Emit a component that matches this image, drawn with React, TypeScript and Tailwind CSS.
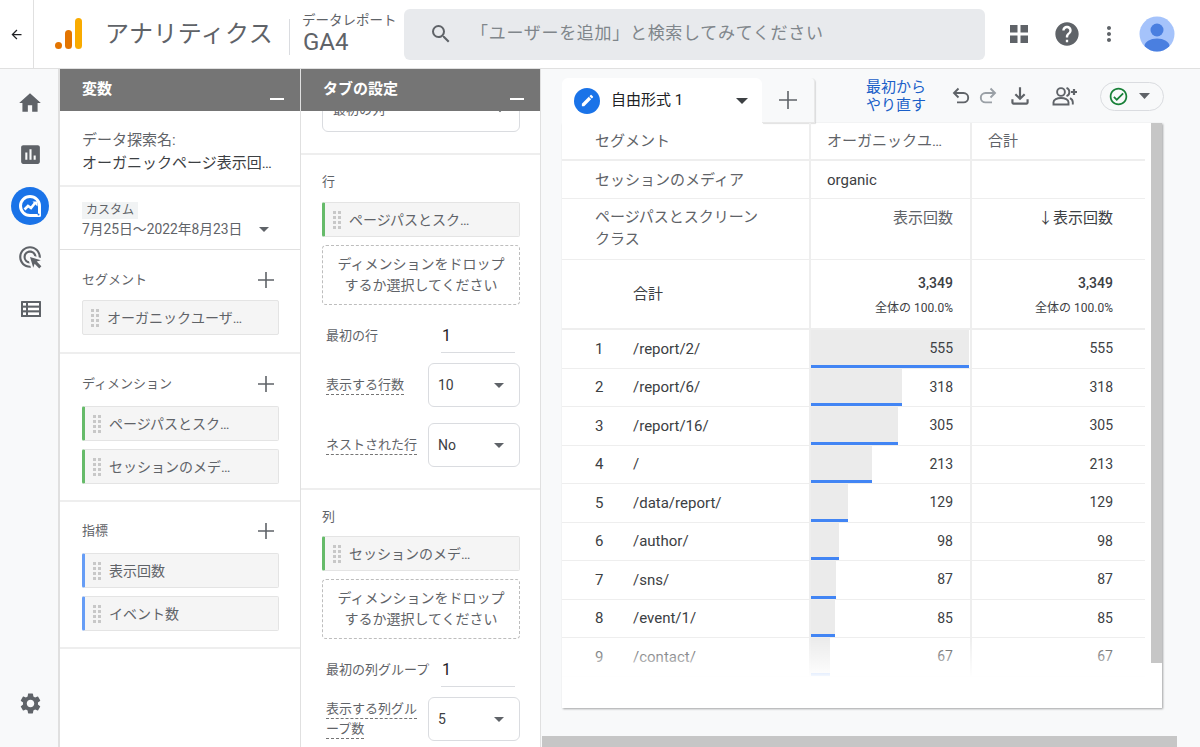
import {
  MdAdsClick,
  MdArrowBack,
  MdArrowDropDown,
  MdAssessment,
  MdEdit,
  MdHelp,
  MdHome,
  MdMoreVert,
  MdOutlineCheckCircle,
  MdOutlineFileDownload,
  MdSearch,
  MdSettings,
} from "react-icons/md";

const rows = [
  { path: "/report/2/", value: 555 },
  { path: "/report/6/", value: 318 },
  { path: "/report/16/", value: 305 },
  { path: "/", value: 213 },
  { path: "/data/report/", value: 129 },
  { path: "/author/", value: 98 },
  { path: "/sns/", value: 87 },
  { path: "/event/1/", value: 85 },
  { path: "/contact/", value: 67 },
];

function Logo() {
  return (
    <svg width="30" height="34" viewBox="0 0 30 34" className="shrink-0">
      <circle cx="4.5" cy="28.5" r="3.5" fill="#e37400" />
      <rect x="11" y="13" width="7" height="19" rx="3.5" fill="#e37400" />
      <rect x="21" y="1" width="7" height="31" rx="3.5" fill="#f9ab00" />
    </svg>
  );
}

function AppsIcon() {
  return (
    <svg width="18" height="18" viewBox="0 0 18 18" fill="#5f6368">
      <rect x="0" y="0" width="7.5" height="7.5" />
      <rect x="10.5" y="0" width="7.5" height="7.5" />
      <rect x="0" y="10.5" width="7.5" height="7.5" />
      <rect x="10.5" y="10.5" width="7.5" height="7.5" />
    </svg>
  );
}

function Avatar() {
  return (
    <svg width="36" height="36" viewBox="0 0 36 36">
      <defs>
        <clipPath id="avatar-clip">
          <circle cx="18" cy="18" r="17.5" />
        </clipPath>
      </defs>
      <circle cx="18" cy="18" r="17.5" fill="#a5c3fb" />
      <g clipPath="url(#avatar-clip)" fill="#4a7fe0">
        <circle cx="18" cy="14" r="6.5" />
        <ellipse cx="18" cy="30" rx="12.5" ry="7.5" />
      </g>
    </svg>
  );
}

function ExploreIcon() {
  return (
    <svg width="38" height="38" viewBox="0 0 38 38">
      <circle cx="19" cy="19" r="19" fill="#1a73e8" />
      <path
        d="M19 9.5a9.5 9.5 0 1 0 0 19h9.5V19A9.5 9.5 0 0 0 19 9.5z"
        fill="none"
        stroke="#fff"
        strokeWidth="3"
        strokeLinejoin="round"
      />
      <path d="M13.5 22.5l3.5-3.5 3 2 4-5" fill="none" stroke="#fff" strokeWidth="2.6" />
      <path d="M21.5 14.5h5v5z" fill="#fff" />
      <circle cx="27.5" cy="27.5" r="1" fill="#1a73e8" />
    </svg>
  );
}

function ListIcon() {
  return (
    <svg width="20" height="16" viewBox="0 0 20 16" className="ml-[4px] mt-[31px]">
      <rect width="20" height="16" rx="0.5" fill="#5f6368" />
      <g fill="#fff">
        <rect x="2" y="2" width="3" height="2.6" />
        <rect x="7" y="2" width="11" height="2.6" />
        <rect x="2" y="6.7" width="3" height="2.6" />
        <rect x="7" y="6.7" width="11" height="2.6" />
        <rect x="2" y="11.4" width="3" height="2.6" />
        <rect x="7" y="11.4" width="11" height="2.6" />
      </g>
    </svg>
  );
}

function UndoIcon({ className }: { className?: string }) {
  return (
    <svg width="18" height="18" viewBox="0 0 18 18" fill="none" stroke="currentColor" strokeWidth="1.9" className={className}>
      <path d="M6.5 1.5L2 6l4.5 4.5" />
      <path d="M2 6h9.5a4.7 4.7 0 0 1 0 9.4H5" />
    </svg>
  );
}

function ShareIcon() {
  return (
    <svg width="26" height="20" viewBox="0 0 26 20" fill="none" stroke="#5f6368" strokeWidth="1.9">
      <circle cx="9" cy="6" r="3.9" />
      <path d="M1.5 18.5v-2.2c0-2.6 3.6-4.3 7.5-4.3s7.5 1.700 7.500 4.300v2.200z" />
      <path d="M14.500 1.800a4.500 4.500 0 0 1 0 8.400" />
      <path d="M18 12.200c1.700.9 2.800 2.300 2.800 4.100v2.200" />
      <path d="M22 3v6M19 6h6" strokeWidth="2.200" />
    </svg>
  );
}

function Handle() {
  return (
    <div className="grid shrink-0 grid-cols-2 gap-x-[2px] gap-y-[2px]">
      {Array.from({ length: 8 }).map((_, i) => (
        <span key={i} className="h-[3px] w-[3px] bg-[#c8c8c8]" />
      ))}
    </div>
  );
}

function Chip({ label, stripe }: { label: string; stripe?: "green" | "blue" }) {
  const stripeClass =
    stripe === "green" ? "border-l-[3px] border-l-[#66bb6a]" : stripe === "blue" ? "border-l-[3px] border-l-[#669df6]" : "";
  return (
    <div
      className={`flex h-[35px] items-center gap-[8px] rounded-[2px] border border-[#e4e4e4] bg-[#f5f5f5] pl-[8px] text-[14px] text-[#5f6368] ${stripeClass}`}
    >
      <Handle />
      <span className="truncate pt-[2px]">{label}</span>
    </div>
  );
}

function PanelHeader({ title }: { title: string }) {
  return (
    <div className="relative z-10 flex h-[42px] shrink-0 items-start justify-between bg-[#757575] pl-[22px] pr-[16px] pt-[10px] text-[15px] font-bold leading-[20px] text-white">
      <span>{title}</span>
      <span className="mt-[19px] h-[2px] w-[14px] bg-white" />
    </div>
  );
}

function SectionTitle({ title }: { title: string }) {
  return (
    <div className="flex h-[22px] items-center justify-between text-[13px] text-[#5f6368]">
      <span>{title}</span>
      <svg width="16" height="16" viewBox="0 0 16 16" className="mr-[5px]" stroke="#5f6368" strokeWidth="1.6">
        <path d="M8 0v16M0 8h16" />
      </svg>
    </div>
  );
}

function DropZone() {
  return (
    <div className="mt-[8px] flex h-[60px] flex-col items-center justify-center rounded-[4px] border border-dashed border-[#bdbdbd] text-[14px] leading-[21px] text-[#5f6368]">
      <span>ディメンションをドロップ</span>
      <span>するか選択してください</span>
    </div>
  );
}

function SelectBox({ value }: { value: string }) {
  return (
    <div className="flex h-[44px] w-[92px] shrink-0 items-center justify-between rounded-[6px] border border-[#dadce0] pl-[9px] pr-[8px] text-[14px] text-[#3c4043]">
      <span>{value}</span>
      <MdArrowDropDown size={24} className="text-[#5f6368]" />
    </div>
  );
}

function InputRow({ label }: { label: string }) {
  return (
    <div className="flex h-[34px] items-center pl-[4px] text-[13px] text-[#5f6368]">
      <span className="w-[115px] shrink-0 whitespace-nowrap">{label}</span>
      <span className="flex h-[34px] w-[74px] items-center border-b border-[#dadce0] pl-[1px] text-[16px] text-[#202124]">1</span>
    </div>
  );
}

function SelectRow({ lines, value }: { lines: string[]; value: string }) {
  return (
    <div className="flex items-center justify-between pl-[4px] text-[13px] leading-[20px] text-[#5f6368]">
      <div className="flex flex-col items-start">
        {lines.map((line) => (
          <span key={line} className="border-b border-dashed border-[#757575] leading-[19px]">
            {line}
          </span>
        ))}
      </div>
      <SelectBox value={value} />
    </div>
  );
}

function VariablesPanel() {
  return (
    <div className="flex w-[241px] shrink-0 flex-col border-r border-[#e0e0e0] bg-white">
      <PanelHeader title="変数" />
      <div className="flex h-[76px] flex-col justify-center border-b-2 border-[#eeeeee] px-[22px] pt-[7px] text-[15px] leading-[23px]">
        <span className="text-[#5f6368]">データ探索名:</span>
        <span className="whitespace-nowrap text-[#3c4043]">オーガニックページ表示回…</span>
      </div>
      <div className="h-[63px] border-b border-[#e0e0e0] px-[22px] pt-[15px] text-[#5f6368]">
        <span className="block w-fit whitespace-nowrap bg-[#f1f3f4] px-[4px] text-[12px] leading-[17px]">カスタム</span>
        <div className="flex items-center justify-between pr-[9px] text-[13.8px] leading-[20px]">
          <span className="whitespace-nowrap">7月25日～2022年8月23日</span>
          <svg width="10" height="5" viewBox="0 0 10 5" fill="#5f6368" className="mt-[1px]">
            <path d="M0 0h10L5 5z" />
          </svg>
        </div>
      </div>
      <div className="h-[104px] border-b-2 border-[#eeeeee] pl-[22px] pr-[21px] pt-[19px]">
        <SectionTitle title="セグメント" />
        <div className="mt-[9px]">
          <Chip label="オーガニックユーザ…" />
        </div>
      </div>
      <div className="h-[148px] border-b-2 border-[#eeeeee] pl-[22px] pr-[21px] pt-[19px]">
        <SectionTitle title="ディメンション" />
        <div className="mt-[11px] flex flex-col gap-[8px]">
          <Chip label="ページパスとスク…" stripe="green" />
          <Chip label="セッションのメデ…" stripe="green" />
        </div>
      </div>
      <div className="h-[147px] border-b-2 border-[#eeeeee] pl-[22px] pr-[21px] pt-[18px]">
        <SectionTitle title="指標" />
        <div className="mt-[11px] flex flex-col gap-[8px]">
          <Chip label="表示回数" stripe="blue" />
          <Chip label="イベント数" stripe="blue" />
        </div>
      </div>
    </div>
  );
}

function SettingsPanel() {
  return (
    <div className="flex w-[240px] shrink-0 flex-col overflow-hidden border-r border-[#e0e0e0] bg-white">
      <PanelHeader title="タブの設定" />
      <div className="h-[44px] shrink-0 border-b-2 border-[#eeeeee] pl-[21px] pr-[20px]">
        <div className="-mt-[23px] flex h-[44px] items-center justify-between rounded-[6px] border border-[#dadce0] px-[10px] text-[13px] text-[#5f6368]">
          <span>最初の列</span>
          <MdArrowDropDown size={18} />
        </div>
      </div>
      <div className="flex h-[335px] shrink-0 flex-col border-b-2 border-[#eeeeee] pl-[21px] pr-[20px] pt-[16px]">
        <div className="flex h-[22px] items-center text-[13px] text-[#5f6368]">行</div>
        <div className="mt-[9px]">
          <Chip label="ページパスとスク…" stripe="green" />
        </div>
        <DropZone />
        <div className="mt-[14px]">
          <InputRow label="最初の行" />
        </div>
        <div className="mt-[10px]">
          <SelectRow lines={["表示する行数"]} value="10" />
        </div>
        <div className="mt-[16px]">
          <SelectRow lines={["ネストされた行"]} value="No" />
        </div>
      </div>
      <div className="flex flex-col pl-[21px] pr-[20px] pt-[16px]">
        <div className="flex h-[22px] items-center text-[13px] text-[#5f6368]">列</div>
        <div className="mt-[8px]">
          <Chip label="セッションのメデ…" stripe="green" />
        </div>
        <DropZone />
        <div className="mt-[14px]">
          <InputRow label="最初の列グループ" />
        </div>
        <div className="mt-[10px]">
          <SelectRow lines={["表示する列グル", "ープ数"]} value="5" />
        </div>
      </div>
    </div>
  );
}

function TabBar() {
  return (
    <div className="flex h-[45px] w-[603px] items-stretch">
      <div className="flex w-[200px] items-center rounded-t-[6px] bg-white pl-[12px] pr-[14px]">
        <span className="flex h-[26px] w-[26px] items-center justify-center rounded-full bg-[#1a73e8]">
          <MdEdit size={15} className="text-white" />
        </span>
        <span className="ml-[11px] flex-1 text-[15px] text-[#202124]">自由形式 1</span>
        <svg width="12" height="6" viewBox="0 0 12 6" fill="#3c4043">
          <path d="M0 0h12L6 6z" />
        </svg>
      </div>
      <div className="flex w-[53px] items-center justify-center rounded-tr-[4px] border-b border-r border-[#e8e8e8] bg-[#f8f9fa] shadow-[1px_1px_1px_rgba(0,0,0,0.12)]">
        <svg width="18" height="18" viewBox="0 0 18 18" stroke="#5f6368" strokeWidth="1.6">
          <path d="M9 0v18M0 9h18" />
        </svg>
      </div>
      <div className="ml-[51px] flex h-[36px] w-[62px] shrink-0 flex-col whitespace-nowrap text-[15px] leading-[18px] text-[#1a5fc8]">
        <span>最初から</span>
        <span>やり直す</span>
      </div>
      <div className="ml-[24px] flex items-center pb-[9px] text-[#5f6368]">
        <UndoIcon />
        <UndoIcon className="ml-[9px] -scale-x-100 text-[#9aa0a6]" />
        <MdOutlineFileDownload size={26} className="ml-[10px]" />
        <div className="ml-[19px]">
          <ShareIcon />
        </div>
        <div className="ml-[22px] flex h-[29px] w-[64px] shrink-0 items-center rounded-full border border-[#dadce0] pl-[7px]">
          <MdOutlineCheckCircle size={21} className="text-[#188038]" />
          <svg width="11" height="6" viewBox="0 0 11 6" fill="#5f6368" className="ml-[10px]">
            <path d="M0 0h11L5.5 6z" />
          </svg>
        </div>
      </div>
    </div>
  );
}

function DataTable() {
  return (
    <div className="relative h-[560px] w-[583px] overflow-hidden text-[15px] text-[#5f6368]">
      <div className="grid h-[38px] grid-cols-[249px_161px_1fr] border-b-2 border-[#eeeeee]">
        <div className="flex items-center border-r-2 border-[#eeeeee] pl-[33px]">セグメント</div>
        <div className="flex items-center whitespace-nowrap border-r-2 border-[#eeeeee] pl-[16px]">オーガニックユ…</div>
        <div className="flex items-center pl-[16px]">合計</div>
      </div>
      <div className="grid h-[38px] grid-cols-[249px_161px_1fr] border-b border-[#eeeeee]">
        <div className="flex items-center border-r-2 border-[#eeeeee] pl-[33px] pt-[2px]">セッションのメディア</div>
        <div className="flex items-center border-r-2 border-[#eeeeee] pl-[16px] pt-[2px] text-[#3c4043]">organic</div>
        <div />
      </div>
      <div className="grid h-[61px] grid-cols-[249px_161px_1fr] border-b border-[#eeeeee]">
        <div className="border-r-2 border-[#eeeeee] pl-[33px] pt-[7px] leading-[22px]">
          ページパスとスクリーン
          <br />
          クラス
        </div>
        <div className="border-r-2 border-[#eeeeee] pr-[17px] pt-[8px] text-right">表示回数</div>
        <div className="pr-[32px] pt-[8px] text-right text-[#3c4043]">↓表示回数</div>
      </div>
      <div className="grid h-[70px] grid-cols-[249px_161px_1fr] border-b-2 border-[#eeeeee]">
        <div className="flex items-center border-r-2 border-[#eeeeee] pl-[71px] text-[#3c4043]">合計</div>
        <div className="flex flex-col items-end border-r-2 border-[#eeeeee] pr-[17px] pt-[13px]">
          <span className="text-[14px] font-medium leading-[20px] text-[#3c4043]">3,349</span>
          <span className="mt-[7px] text-[12px] leading-[16px] text-[#3c4043]">全体の 100.0%</span>
        </div>
        <div className="flex flex-col items-end pr-[32px] pt-[13px]">
          <span className="text-[14px] font-medium leading-[20px] text-[#3c4043]">3,349</span>
          <span className="mt-[7px] text-[12px] leading-[16px] text-[#3c4043]">全体の 100.0%</span>
        </div>
      </div>
      {rows.map((row, i) => (
        <div key={row.path} className="grid h-[38.5px] grid-cols-[249px_161px_1fr] border-b border-[#eeeeee] text-[#3c4043]">
          <div className="flex items-center border-r-2 border-[#eeeeee] pl-[33px]">
            <span className="w-[38px] text-[#3c4043]">{i + 1}</span>
            <span>{row.path}</span>
          </div>
          <div className="relative flex items-center justify-end border-r-2 border-[#eeeeee] pr-[17px] text-[14px]">
            <div
              className="absolute bottom-0 left-0 top-0 border-b-[3px] border-[#4285f4] bg-[#ebebeb]"
              style={{ width: `${(row.value / 555) * 158}px` }}
            />
            <span className="relative">{row.value}</span>
          </div>
          <div className="flex items-center justify-end pr-[32px] text-[14px]">{row.value}</div>
        </div>
      ))}
      <div className="absolute bottom-0 left-0 right-0 h-[45px] bg-gradient-to-b from-transparent to-white to-90%" />
    </div>
  );
}

export default function App() {
  return (
    <div className="flex h-[747px] w-[1200px] flex-col overflow-hidden bg-white font-['Roboto','Noto_Sans_CJK_JP',sans-serif]">
      <header className="flex h-[69px] shrink-0 items-center border-b border-[#e0e0e0]">
        <div className="flex h-full w-[34px] shrink-0 items-center justify-center border-r border-[#e0e0e0]">
          <MdArrowBack size={15} className="text-[#202124]" />
        </div>
        <div className="ml-[20px] flex items-center">
          <Logo />
          <span className="ml-[21px] w-[167px] shrink-0 whitespace-nowrap text-[24px] tracking-[0.4px] text-[#5f6368]">アナリティクス</span>
        </div>
        <div className="mb-[13px] ml-[17px] h-[36px] w-px self-end bg-[#dadce0]" />
        <div className="ml-[12px] flex w-[93px] shrink-0 flex-col pb-[2px]">
          <span className="whitespace-nowrap text-[13.5px] leading-[18px] text-[#5f6368]">データレポート</span>
          <span className="pl-[1px] text-[24px] leading-[27px] text-[#5f6368]">GA4</span>
        </div>
        <div className="ml-[9px] flex h-[51px] w-[581px] shrink-0 items-center rounded-[6px] bg-[#e8eaed] pl-[25px]">
          <MdSearch size={24} className="text-[#5f6368]" />
          <span className="ml-[18px] whitespace-nowrap text-[17px] tracking-[0.7px] text-[#80868b]">「ユーザーを追加」と検索してみてください</span>
        </div>
        <div className="ml-[25px]">
          <AppsIcon />
        </div>
        <MdHelp size={28} className="ml-[25px] text-[#5f6368]" />
        <MdMoreVert size={24} className="ml-[16px] text-[#5f6368]" />
        <div className="ml-[18px]">
          <Avatar />
        </div>
      </header>
      <div className="flex min-h-0 flex-1">
        <nav className="flex w-[60px] shrink-0 flex-col items-center border-r-2 border-[#e0e0e0] bg-[#f8f9fa] pb-[31px] pt-[21px] text-[#5f6368]">
          <MdHome size={26} className="ml-[2px]" />
          <MdAssessment size={25} className="ml-[2px] mt-[26px]" />
          <div className="ml-[2px] mt-[20px]">
            <ExploreIcon />
          </div>
          <MdAdsClick size={26} className="ml-[1px] mt-[19px]" />
          <ListIcon />
          <MdSettings size={25} className="ml-[2px] mt-auto" />
        </nav>
        <VariablesPanel />
        <SettingsPanel />
        <main className="min-w-0 flex-1 bg-[#f8f9fa] pl-[21px] pt-[9px]">
          <TabBar />
          <div className="flex h-[585px] w-[600px] bg-white shadow-[1px_1px_2px_rgba(0,0,0,0.35)]">
            <DataTable />
            <div className="ml-[6px] h-[540px] w-[11px] bg-[#c6c6c6]" />
          </div>
          <div className="-ml-[20px] mt-[28px] h-[12px] w-[635px] bg-[#c6c6c6]" />
        </main>
      </div>
    </div>
  );
}
